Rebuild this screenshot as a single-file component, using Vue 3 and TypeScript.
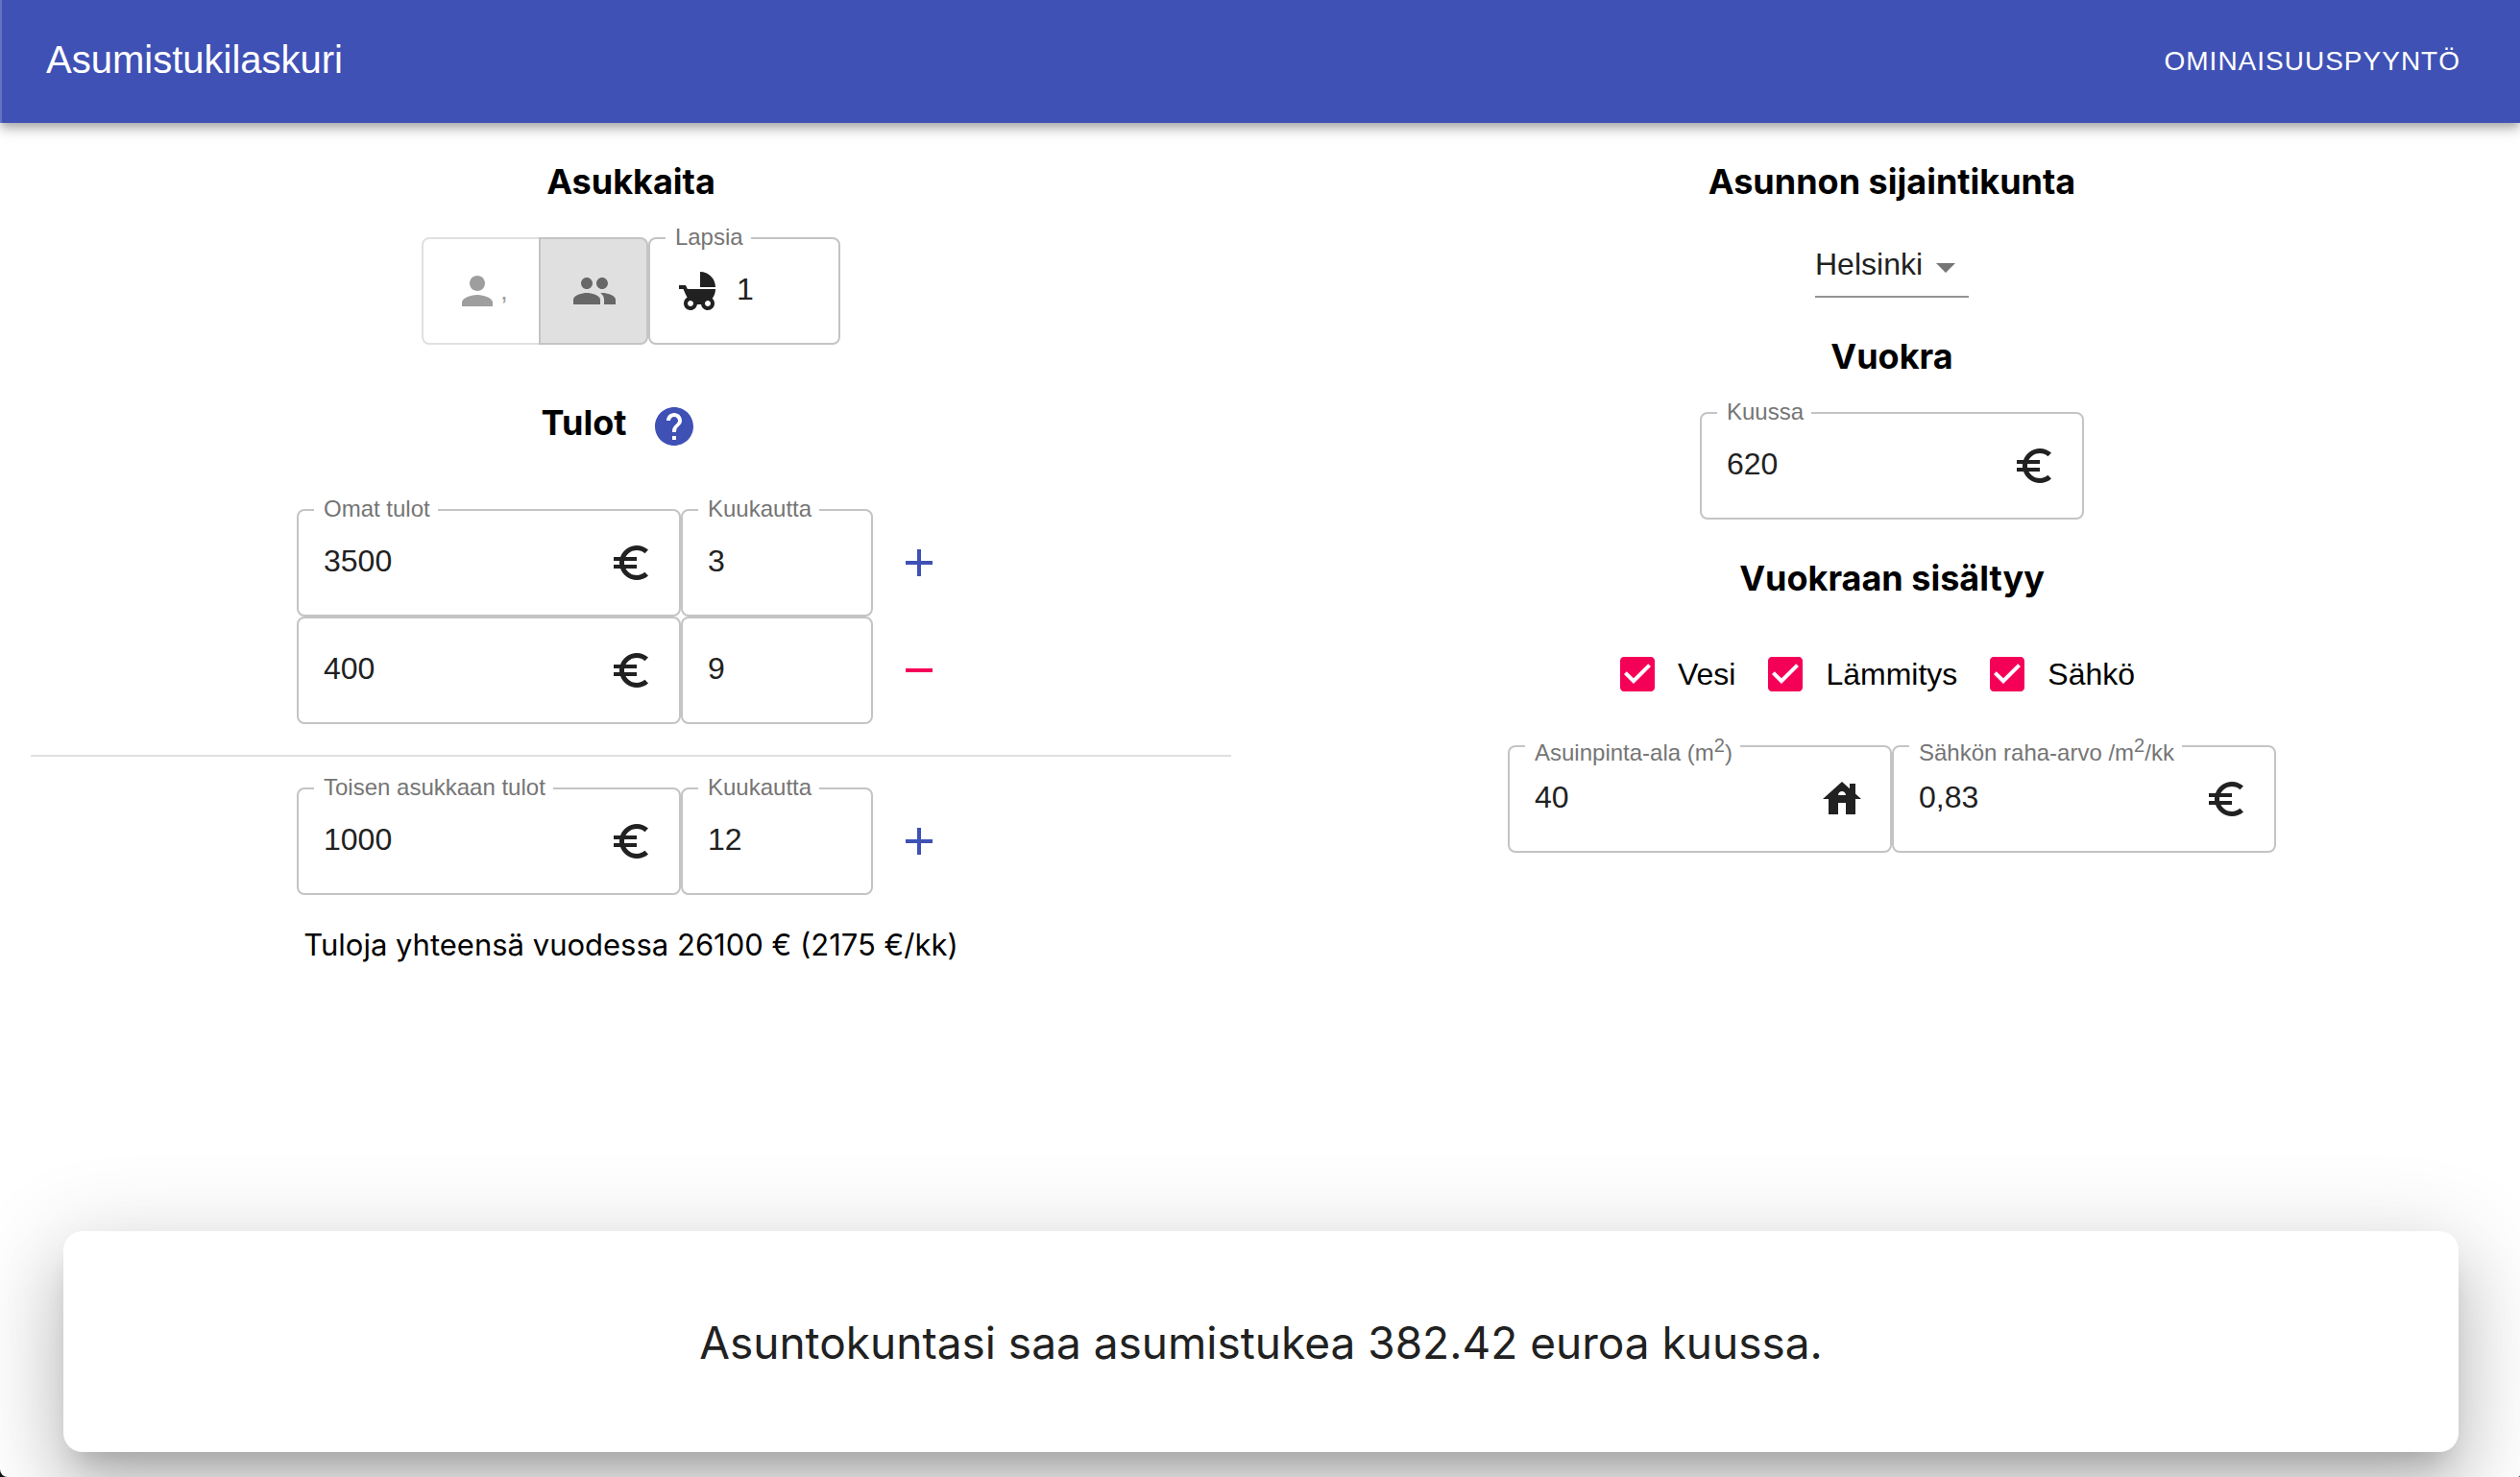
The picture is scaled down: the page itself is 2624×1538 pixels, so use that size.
<script setup lang="ts">
import { computed, reactive, ref } from 'vue'

interface Income {
  amount: string
  months: string
}

const adults = ref<1 | 2>(2)
const children = ref('1')
const ownIncomes = reactive<Income[]>([
  { amount: '3500', months: '3' },
  { amount: '400', months: '9' },
])
const partnerIncomes = reactive<Income[]>([{ amount: '1000', months: '12' }])

const municipality = ref('Helsinki')
const rent = ref('620')
const included = reactive([
  { id: 'water', label: 'Vesi', checked: true },
  { id: 'heating', label: 'Lämmitys', checked: true },
  { id: 'electricity', label: 'Sähkö', checked: true },
])
const area = ref('40')
const electricityValue = ref('0,83')
const allowance = ref('382.42')

const groups = computed(() => [
  { id: 'own', label: 'Omat tulot', rows: ownIncomes },
  { id: 'partner', label: 'Toisen asukkaan tulot', rows: partnerIncomes },
])

const yearly = computed(() =>
  [...ownIncomes, ...partnerIncomes].reduce((sum, i) => sum + Number(i.amount) * Number(i.months), 0),
)
const monthly = computed(() => Math.round(yearly.value / 12))

function changeRows(rows: Income[], index: number) {
  if (index === 0) rows.push({ amount: '0', months: '12' })
  else rows.splice(index, 1)
}

const icons = {
  person: 'M12 12c2.21 0 4-1.79 4-4s-1.79-4-4-4-4 1.79-4 4 1.79 4 4 4zm0 2c-2.67 0-8 1.34-8 4v2h16v-2c0-2.66-5.33-4-8-4z',
  people: 'M16 11c1.66 0 2.99-1.34 2.99-3S17.66 5 16 5s-3 1.34-3 3 1.34 3 3 3zm-8 0c1.66 0 2.99-1.34 2.99-3S9.66 5 8 5 5 6.34 5 8s1.34 3 3 3zm0 2c-2.33 0-7 1.17-7 3.5V19h14v-2.5c0-2.33-4.67-3.5-7-3.5zm8 0c-.29 0-.62.02-.97.05 1.16.84 1.97 1.97 1.97 3.45V19h6v-2.5c0-2.33-4.67-3.5-7-3.5z',
  stroller: 'M13 2v8h8c0-4.42-3.58-8-8-8zm6.32 13.89C20.37 14.54 21 12.84 21 11H6.44l-.95-2H2v2h2.22s1.89 4.07 2.12 4.42c-1.1.59-1.84 1.75-1.84 3.08C4.5 20.43 6.07 22 8 22c1.76 0 3.22-1.3 3.46-3h2.08c.24 1.7 1.7 3 3.46 3 1.93 0 3.5-1.57 3.5-3.5 0-1.04-.46-1.97-1.18-2.61zM8 20c-.83 0-1.5-.67-1.5-1.5S7.17 17 8 17s1.5.67 1.5 1.5S8.83 20 8 20zm9 0c-.83 0-1.5-.67-1.5-1.5S16.17 17 17 17s1.5.67 1.5 1.5S17.83 20 17 20z',
  help: 'M12 2C6.48 2 2 6.48 2 12s4.48 10 10 10 10-4.48 10-10S17.52 2 12 2zm1 17h-2v-2h2v2zm2.07-7.75l-.9.92C13.45 12.9 13 13.5 13 15h-2v-.5c0-1.1.45-2.1 1.17-2.83l1.24-1.26c.37-.36.59-.86.59-1.41 0-1.1-.9-2-2-2s-2 .9-2 2H8c0-2.21 1.79-4 4-4s4 1.79 4 4c0 .88-.36 1.68-.93 2.25z',
  euro: 'M15 18.5c-2.51 0-4.68-1.42-5.76-3.5H15v-2H8.58c-.05-.33-.08-.66-.08-1s.03-.67.08-1H15V9H9.24C10.32 6.92 12.5 5.5 15 5.5c1.61 0 3.09.59 4.23 1.57L21 5.3C19.41 3.87 17.3 3 15 3c-3.92 0-7.24 2.51-8.48 6H3v2h3.06c-.04.33-.06.66-.06 1s.02.67.06 1H3v2h3.52c1.24 3.49 4.56 6 8.48 6 2.31 0 4.41-.87 6-2.3l-1.78-1.77c-1.13.98-2.6 1.57-4.22 1.57z',
  add: 'M19 13h-6v6h-2v-6H5v-2h6V5h2v6h6v2z',
  remove: 'M19 13H5v-2h14v2z',
  house: 'M19 9.3V4h-3v2.6L12 3 2 12h3v8h5v-6h4v6h5v-8h3l-3-2.7zm-9 .7c0-1.1.9-2 2-2s2 .9 2 2h-4z',
  arrow: 'M7 10l5 5 5-5z',
  tick: 'M19 3H5c-1.11 0-2 .9-2 2v14c0 1.1.89 2 2 2h14c1.11 0 2-.9 2-2V5c0-1.1-.89-2-2-2zm-9 14l-5-5 1.41-1.41L10 14.17l7.59-7.59L19 8l-9 9z',
  box: 'M19 5v14H5V5h14m0-2H5c-1.1 0-2 .9-2 2v14c0 1.1.9 2 2 2h14c1.1 0 2-.9 2-2V5c0-1.1-.9-2-2-2z',
}
</script>

<template>
  <div class="page">
    <header class="bar">
      <h1 class="bar-title">Asumistukilaskuri</h1>
      <button type="button" class="bar-action">Ominaisuuspyyntö</button>
    </header>

    <main class="columns">
      <section class="column">
        <h3 class="heading">Asukkaita</h3>
        <div class="row">
          <div class="toggle" role="group" aria-label="Aikuisia">
            <button type="button" class="toggle-btn" :class="{ selected: adults === 1 }" aria-label="Yksi aikuinen" @click="adults = 1">
              <svg class="icon" viewBox="0 0 24 24"><path :d="icons.person" /></svg>,
            </button>
            <button type="button" class="toggle-btn pair" :class="{ selected: adults === 2 }" aria-label="Kaksi aikuista" @click="adults = 2">
              <svg class="icon" viewBox="0 0 24 24"><path :d="icons.people" /></svg>
            </button>
          </div>
          <div class="field narrow">
            <label class="field-label" for="children">Lapsia</label>
            <svg class="icon lead" viewBox="0 0 24 24"><path :d="icons.stroller" /></svg>
            <input id="children" v-model="children" class="field-input" type="text" inputmode="numeric" />
          </div>
        </div>

        <div class="income-head">
          <h3 class="heading">Tulot</h3>
          <button type="button" class="icon-btn primary" aria-label="Ohje">
            <svg class="icon" viewBox="0 0 24 24"><path :d="icons.help" /></svg>
          </button>
        </div>

        <template v-for="(group, g) in groups" :key="group.id">
          <hr v-if="g > 0" class="divider" />
          <div v-for="(income, i) in group.rows" :key="i" class="row">
            <div class="field">
              <label v-if="i === 0" class="field-label" :for="`${group.id}-amount-${i}`">{{ group.label }}</label>
              <input :id="`${group.id}-amount-${i}`" v-model="income.amount" class="field-input" type="text" inputmode="numeric" :aria-label="group.label" />
              <svg class="icon" viewBox="0 0 24 24"><path :d="icons.euro" /></svg>
            </div>
            <div class="field narrow">
              <label v-if="i === 0" class="field-label" :for="`${group.id}-months-${i}`">Kuukautta</label>
              <input :id="`${group.id}-months-${i}`" v-model="income.months" class="field-input" type="text" inputmode="numeric" aria-label="Kuukautta" />
            </div>
            <button
              type="button"
              class="icon-btn"
              :class="i === 0 ? 'primary' : 'secondary'"
              :aria-label="i === 0 ? 'Lisää tulo' : 'Poista tulo'"
              @click="changeRows(group.rows, i)"
            >
              <svg class="icon" viewBox="0 0 24 24"><path :d="i === 0 ? icons.add : icons.remove" /></svg>
            </button>
          </div>
        </template>

        <p class="total">Tuloja yhteensä vuodessa {{ yearly }} € ({{ monthly }} €/kk)</p>
      </section>

      <section class="column">
        <h3 id="municipality-title" class="heading">Asunnon sijaintikunta</h3>
        <div class="select">
          <select v-model="municipality" class="select-input" aria-labelledby="municipality-title">
            <option>Helsinki</option>
            <option>Espoo</option>
            <option>Vantaa</option>
          </select>
          <svg class="icon select-arrow" viewBox="0 0 24 24"><path :d="icons.arrow" /></svg>
        </div>

        <h3 class="heading">Vuokra</h3>
        <div class="row">
          <div class="field">
            <label class="field-label" for="rent">Kuussa</label>
            <input id="rent" v-model="rent" class="field-input" type="text" inputmode="numeric" />
            <svg class="icon" viewBox="0 0 24 24"><path :d="icons.euro" /></svg>
          </div>
        </div>

        <h3 class="heading">Vuokraan sisältyy</h3>
        <div class="row checks">
          <label v-for="item in included" :key="item.id" class="check" :for="item.id">
            <span class="check-box">
              <input :id="item.id" v-model="item.checked" class="check-input" type="checkbox" />
              <svg class="icon" viewBox="0 0 24 24"><path :d="item.checked ? icons.tick : icons.box" /></svg>
            </span>
            {{ item.label }}
          </label>
        </div>

        <div class="row details">
          <div class="field">
            <label class="field-label" for="area">Asuinpinta-ala (m<sup>2</sup>)</label>
            <input id="area" v-model="area" class="field-input" type="text" inputmode="numeric" />
            <svg class="icon" viewBox="0 0 24 24"><path :d="icons.house" /></svg>
          </div>
          <div class="field">
            <label class="field-label" for="electricity-value">Sähkön raha-arvo /m<sup>2</sup>/kk</label>
            <input id="electricity-value" v-model="electricityValue" class="field-input" type="text" inputmode="decimal" />
            <svg class="icon" viewBox="0 0 24 24"><path :d="icons.euro" /></svg>
          </div>
        </div>
      </section>
    </main>

    <footer class="result">
      <p class="result-text">Asuntokuntasi saa asumistukea {{ allowance }} euroa kuussa.</p>
    </footer>
  </div>
</template>

<style>
html {
  background: #0b1416;
}

body {
  margin: 0;
}
</style>

<style scoped>
.page {
  display: flex;
  flex-direction: column;
  box-sizing: border-box;
  min-height: 100vh;
  overflow: hidden;
  border-radius: 0 0 2px 8px;
  background: #fff;
  color: #000;
  font-family: Inter, sans-serif;
  font-size: 32px;
}

.icon {
  display: block;
  flex: none;
  width: 48px;
  height: 48px;
  fill: currentColor;
}

.bar {
  position: relative;
  z-index: 1;
  display: flex;
  align-items: center;
  justify-content: space-between;
  box-sizing: border-box;
  min-height: 128px;
  padding: 0 48px 0 46px;
  border-left: 2px solid #6472c3;
  background: #3f51b5;
  color: #fff;
  font-family: "Liberation Sans", Arial, sans-serif;
  box-shadow:
    0 4px 8px -2px rgba(0, 0, 0, 0.2),
    0 8px 10px 0 rgba(0, 0, 0, 0.14),
    0 2px 20px 0 rgba(0, 0, 0, 0.12);
}

.bar-title {
  margin: 0;
  padding-bottom: 4px;
  font-size: 40px;
  font-weight: 400;
  line-height: 60px;
}

.bar-action {
  padding: 12px 14px;
  border: 0;
  background: none;
  color: inherit;
  font-family: inherit;
  font-size: 28px;
  line-height: 48px;
  letter-spacing: 1px;
  text-transform: uppercase;
  cursor: pointer;
}

.columns {
  display: grid;
  grid-template-columns: 1fr 1fr;
}

.column {
  display: flex;
  flex-direction: column;
  align-items: center;
  padding: 0 30px 0 32px;
}

.column + .column {
  padding: 0 32px 0 36px;
}

.heading {
  margin: 39px 0 36px;
  font-size: 36px;
  font-weight: 700;
  line-height: 44px;
}

.row {
  display: flex;
  align-items: center;
  justify-content: center;
}

.toggle {
  display: flex;
  height: 112px;
}

.toggle-btn {
  display: flex;
  align-items: center;
  box-sizing: border-box;
  padding: 0 32px;
  border: 2px solid #e0e0e0;
  border-radius: 8px 0 0 8px;
  background: #fff;
  color: #9e9e9e;
  font-family: "Liberation Sans", Arial, sans-serif;
  font-size: 28px;
  cursor: pointer;
}

.toggle-btn.pair {
  margin-left: -2px;
  padding: 0 30px 0 32px;
  border-radius: 0 8px 8px 0;
}

.toggle-btn.selected {
  border-color: #c4c4c4;
  background: #e0e0e0;
  color: #676767;
}

.field {
  position: relative;
  display: flex;
  align-items: center;
  box-sizing: border-box;
  width: 400px;
  height: 112px;
  padding: 0 26px;
  border: 2px solid #c4c4c4;
  border-radius: 8px;
  color: #212121;
  font-family: "Liberation Sans", Arial, sans-serif;
}

.field.narrow {
  width: 200px;
}

.lead {
  margin-right: 16px;
}

.field-label {
  position: absolute;
  top: -14px;
  left: 16px;
  padding: 0 8px 0 10px;
  background: #fff;
  color: #757575;
  font-size: 24px;
  line-height: 24px;
  white-space: nowrap;
}

.field-input {
  flex: 1;
  min-width: 0;
  padding: 0 0 4px;
  border: 0;
  outline: 0;
  background: none;
  color: inherit;
  font-family: inherit;
  font-size: 32px;
  line-height: 38px;
}

.income-head {
  display: flex;
  align-items: flex-start;
  gap: 2px;
  margin: 37px 0 38px;
}

.income-head .heading {
  margin: 22px 0 0;
}

.icon-btn {
  padding: 24px;
  border: 0;
  background: none;
  cursor: pointer;
}

.primary {
  color: #3f51b5;
}

.secondary {
  color: #f50057;
}

.divider {
  align-self: stretch;
  height: 2px;
  margin: 32px 0;
  border: 0;
  background: #e0e0e0;
}

.total {
  margin: 32px 0 0;
  font-size: 31px;
  line-height: 40px;
}

.select {
  position: relative;
  color: #212121;
}

.select-input {
  display: block;
  box-sizing: border-box;
  width: 160px;
  height: 63px;
  padding: 0 48px 6px 0;
  border: 0;
  border-bottom: 2px solid #949494;
  border-radius: 0;
  outline: 0;
  appearance: none;
  background: none;
  color: inherit;
  font-family: "Liberation Sans", Arial, sans-serif;
  font-size: 32px;
}

.select-arrow {
  position: absolute;
  top: 7px;
  right: 0;
  color: #757575;
  pointer-events: none;
}

.check {
  display: flex;
  align-items: center;
  margin: 0 32px 0 -22px;
  font-family: "Liberation Sans", Arial, sans-serif;
  cursor: pointer;
}

.check-box {
  position: relative;
  padding: 18px;
  color: #f50057;
}

.check-input {
  position: absolute;
  inset: 0;
  width: 100%;
  height: 100%;
  margin: 0;
  opacity: 0;
  cursor: pointer;
}

.details {
  margin-top: 32px;
}

.result {
  display: flex;
  align-items: center;
  justify-content: center;
  box-sizing: border-box;
  min-height: 230px;
  margin: auto 64px 26px 66px;
  padding: 34px 32px 32px;
  border-radius: 20px;
  background: #fff;
  color: #212121;
  box-shadow:
    0 22px 30px -14px rgba(0, 0, 0, 0.2),
    0 48px 76px 6px rgba(0, 0, 0, 0.14),
    0 18px 92px 16px rgba(0, 0, 0, 0.12);
}

.result-text {
  margin: 0;
  font-size: 46px;
  line-height: 64px;
}
</style>
